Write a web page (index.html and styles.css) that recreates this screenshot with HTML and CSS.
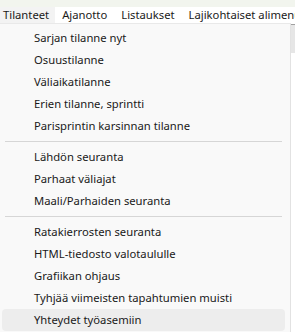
FILE: index.html
```html
<!DOCTYPE html>
<html lang="fi">
<head>
  <meta charset="UTF-8">
  <title>Tilanteet</title>
  <link rel="stylesheet" href="styles.css">
</head>
<body>
  <div class="top-strip"></div>

  <div class="menubar">
    <div class="menubar-item active">Tilanteet</div>
    <div class="menubar-item">Ajanotto</div>
    <div class="menubar-item">Listaukset</div>
    <div class="menubar-item">Lajikohtaiset alimenu</div>
  </div>

  <div class="below">
    <div class="dropdown">
      <div class="menu-item">Sarjan tilanne nyt</div>
      <div class="menu-item">Osuustilanne</div>
      <div class="menu-item">Väliaikatilanne</div>
      <div class="menu-item">Erien tilanne, sprintti</div>
      <div class="menu-item">Parisprintin karsinnan tilanne</div>
      <div class="separator"></div>
      <div class="menu-item">Lähdön seuranta</div>
      <div class="menu-item">Parhaat väliajat</div>
      <div class="menu-item">Maali/Parhaiden seuranta</div>
      <div class="separator"></div>
      <div class="menu-item">Ratakierrosten seuranta</div>
      <div class="menu-item">HTML-tiedosto valotaululle</div>
      <div class="menu-item">Grafiikan ohjaus</div>
      <div class="menu-item">Tyhjää viimeisten tapahtumien muisti</div>
      <div class="menu-item hover">Yhteydet työasemiin</div>
    </div>
    <div class="side">
      <div class="side-thumb"></div>
    </div>
  </div>
</body>
</html>
```

FILE: styles.css
```css
/* perusasetukset */
body {
  margin: 0;
  background: #ffffff;
  font-family: "Noto Sans", "Open Sans", sans-serif;
  font-size: 11.25px;
  color: #1a1a1a;
  overflow: hidden;
}

/* ikkunan yläreuna */
.top-strip {
  height: 7px;
  background: #f2f5ee;
}

/* valikkopalkki */
.menubar {
  display: flex;
  height: 16px;
  background: #ffffff;
  overflow: hidden;
}

.menubar-item {
  padding: 0 7px;
  line-height: 16px;
  white-space: nowrap;
}

.menubar-item.active {
  padding: 0 6px 0 3px;
  background: #f3f3f3;
}

/* alasvetovalikko */
.below {
  display: flex;
}

.dropdown {
  width: 290px;
  flex-shrink: 0;
  background: #f9f9f9;
  border-top: 1px solid #e9e9e9;
  border-right: 1px solid #e2e2e2;
  padding-top: 3px;
  height: 320px;
}

.menu-item {
  height: 22px;
  line-height: 21px;
  margin: 0 5px 0 2px;
  padding-left: 32px;
  border-radius: 4px;
  white-space: nowrap;
}

.menu-item.hover {
  background: #ededed;
}

.separator {
  height: 1px;
  margin: 4px 8px 4px 5px;
  background: #d6d6d6;
}

/* oikea reuna */
.side {
  flex: 1;
  background: #ffffff;
}

.side-thumb {
  height: 28px;
  margin-top: 1px;
  background: #e6e6e6;
  border-top: 1px solid #a0a0a0;
}
```
